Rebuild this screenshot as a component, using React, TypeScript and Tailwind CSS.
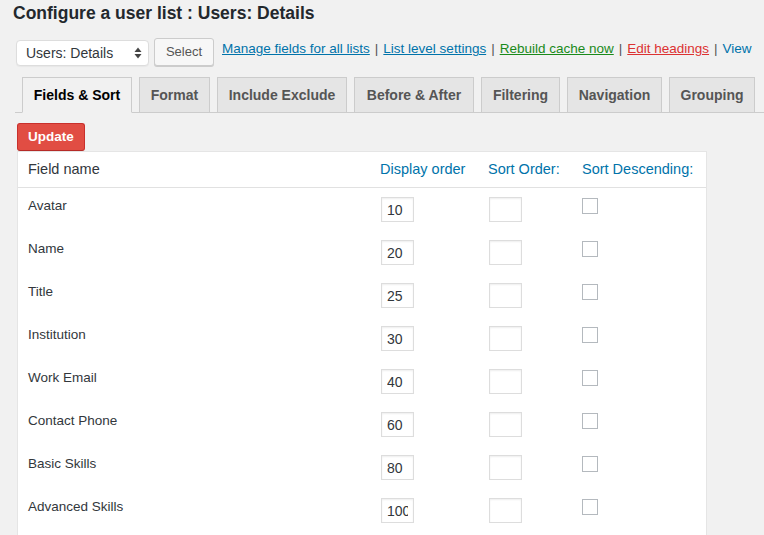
const tabs = [
  { label: "Fields & Sort", w: "w-[110px]", active: true },
  { label: "Format", w: "w-[71px]" },
  { label: "Include Exclude", w: "w-[130px]" },
  { label: "Before & After", w: "w-[120px]" },
  { label: "Filtering", w: "w-[79px]" },
  { label: "Navigation", w: "w-[95px]" },
  { label: "Grouping", w: "w-[86px]" },
];

const rows = [
  { name: "Avatar", order: "10" },
  { name: "Name", order: "20" },
  { name: "Title", order: "25" },
  { name: "Institution", order: "30" },
  { name: "Work Email", order: "40" },
  { name: "Contact Phone", order: "60" },
  { name: "Basic Skills", order: "80" },
  { name: "Advanced Skills", order: "100" },
];

function Sep() {
  return <span className="mx-[5px] text-[#555]">|</span>;
}

export default function App() {
  return (
    <div className="min-h-screen bg-[#f1f1f1] font-['Liberation_Sans',Arial,sans-serif] text-[#32373c] overflow-hidden">
      <h1 className="pl-[13px] pt-[3px] text-[17.5px] font-bold leading-[20px] text-[#23282d]">
        Configure a user list : Users: Details
      </h1>

      {/* list picker + links */}
      <div className="mt-[15px] flex items-start pl-[16px]">
        <div className="mt-[2px] flex h-[26px] w-[133px] items-center justify-between rounded-[4px] border border-[#ddd] bg-white pl-[9px] pr-[6px] text-[14px] text-[#32373c] shadow-[0_1px_1px_rgba(0,0,0,0.04)]">
          <span>Users: Details</span>
          <svg width="8" height="12" viewBox="0 0 8 12">
            <path d="M4 0.5 L7.5 5 H0.5 Z" fill="#444" />
            <path d="M4 11.5 L7.5 7 H0.5 Z" fill="#444" />
          </svg>
        </div>
        <button className="ml-[5px] h-[28px] w-[60px] rounded-[3px] border border-[#ccc] bg-[#f7f7f7] text-[13px] text-[#555] shadow-[0_1px_0_#ccc]">
          Select
        </button>
        <div className="ml-[8px] mt-[2px] flex text-[13.5px] leading-[18px]">
          <a href="#" className="text-[#0073aa] underline">Manage fields for all lists</a>
          <Sep />
          <a href="#" className="text-[#0073aa] underline">List level settings</a>
          <Sep />
          <a href="#" className="text-[#1a8a1a] underline">Rebuild cache now</a>
          <Sep />
          <a href="#" className="text-[#dc3232] underline">Edit headings</a>
          <Sep />
          <a href="#" className="text-[#0073aa]">View</a>
        </div>
      </div>

      {/* tabs */}
      <div className="ml-[15px] mt-[11px] flex gap-[7px] border-b border-[#ccc] pl-[7px]">
        {tabs.map((t) => (
          <div
            key={t.label}
            className={`${t.w} -mb-px flex h-[36px] items-center justify-center border border-[#ccc] text-[14px] font-bold ${
              t.active ? "border-b-[#f1f1f1] bg-[#f1f1f1] text-black" : "bg-[#e5e5e5] text-[#555]"
            }`}
          >
            {t.label}
          </div>
        ))}
      </div>

      <div className="ml-[17px] mt-[10px] w-[690px]">
        <button className="h-[28px] w-[68px] rounded-[3px] border border-[#c9302c] border-b-[#b52b27] bg-[#e14d43] text-[13.5px] font-bold text-white">
          Update
        </button>

        <div className="border border-[#e5e5e5] bg-white pb-[10px]">
          <div className="grid h-[36px] grid-cols-[352px_108px_94px_1fr] items-center border-b border-[#e1e1e1] pl-[10px] text-[14.5px]">
            <span className="text-[#32373c]">Field name</span>
            <span className="text-[#0073aa]">Display order</span>
            <span className="text-[#0073aa]">Sort Order:</span>
            <span className="text-[#0073aa]">Sort Descending:</span>
          </div>
          {rows.map((r) => (
            <div key={r.name} className="grid h-[43px] grid-cols-[352px_108px_94px_1fr] items-start pl-[10px]">
              <span className="pt-[9px] text-[13.5px] leading-[18px] text-[#32373c]">{r.name}</span>
              <div className="pt-[9px]">
                <input
                  defaultValue={r.order}
                  className="ml-[1px] h-[25px] w-[33px] border border-[#ddd] bg-white px-[5px] text-[14px] text-[#32373c] shadow-[inset_0_1px_2px_rgba(0,0,0,0.07)] outline-none"
                />
              </div>
              <div className="pt-[9px]">
                <input className="ml-[1px] h-[25px] w-[33px] border border-[#ddd] bg-white shadow-[inset_0_1px_2px_rgba(0,0,0,0.07)] outline-none" />
              </div>
              <div className="pt-[10px]">
                <input type="checkbox" className="block h-[16px] w-[16px] appearance-none border border-[#b4b9be] bg-white" />
              </div>
            </div>
          ))}
        </div>
      </div>
    </div>
  );
}
